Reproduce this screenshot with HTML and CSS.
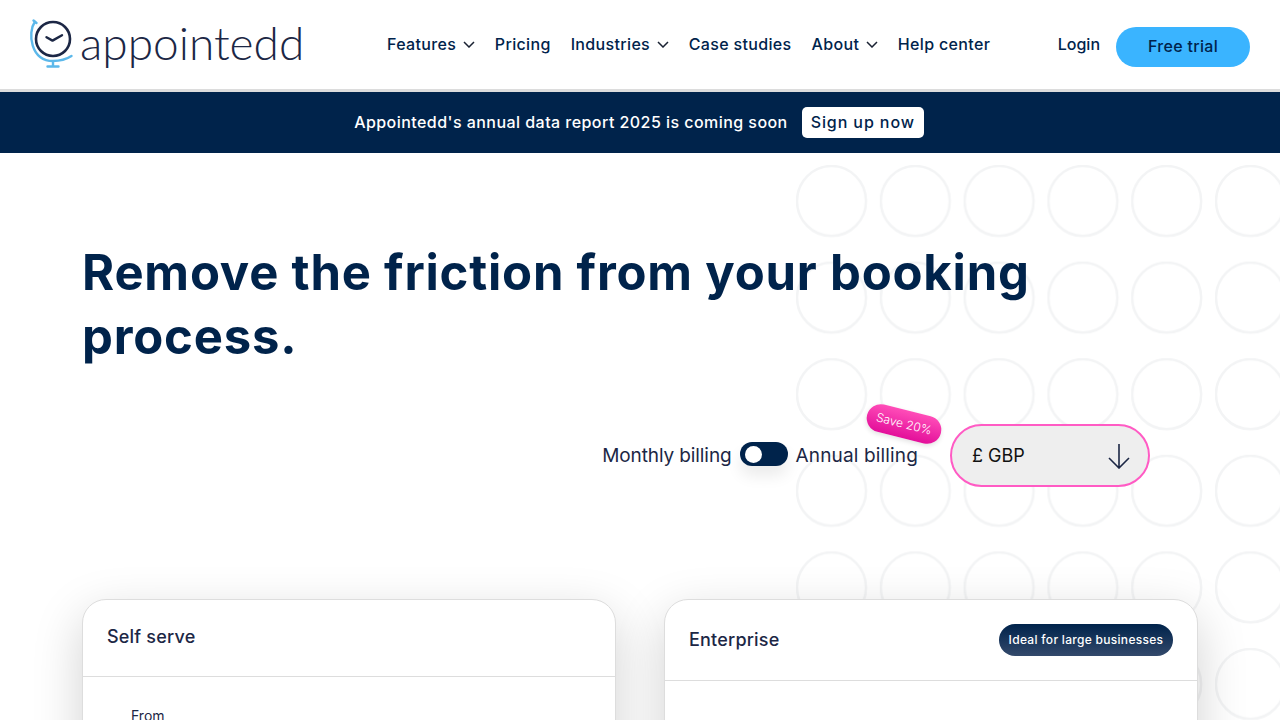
FILE: index.html
```html
<!DOCTYPE html>
<html lang="en">
<head>
    <meta charset="UTF-8">
    <title>Appointedd - Pricing</title>
    <link rel="stylesheet" href="styles.css">
</head>
<body>
<header class="site-header">
    <a class="logo" href="#">
        <svg class="logo-mark" width="46" height="50" viewBox="28 18 46 50" fill="none">
            <circle cx="53" cy="39" r="17" stroke="#1c2745" stroke-width="2.6"/>
            <path d="M46.5 37.2l6 3.4 9.5-5.4" stroke="#1c2745" stroke-width="2.4" stroke-linecap="round" stroke-linejoin="round"/>
            <path d="M33.500 20.500l3 2.500M35 21.500C27 33 31 61 53 61c7 0 13-1.500 18.500-5M53 61v5.500M47.500 66.500h11" stroke="#5cb8ea" stroke-width="2.4" stroke-linecap="round"/>
        </svg>
        <span class="logo-text">appointedd</span>
    </a>
    <nav class="main-nav">
        <a href="#" class="nav-link">Features <svg class="chevron" width="12" height="7" viewBox="0 0 12 7" fill="none"><path d="M1 1l5 5 5-5" stroke="#1a2233" stroke-width="1.500"/></svg></a>
        <a href="#" class="nav-link">Pricing</a>
        <a href="#" class="nav-link">Industries <svg class="chevron" width="12" height="7" viewBox="0 0 12 7" fill="none"><path d="M1 1l5 5 5-5" stroke="#1a2233" stroke-width="1.500"/></svg></a>
        <a href="#" class="nav-link">Case studies</a>
        <a href="#" class="nav-link">About <svg class="chevron" width="12" height="7" viewBox="0 0 12 7" fill="none"><path d="M1 1l5 5 5-5" stroke="#1a2233" stroke-width="1.500"/></svg></a>
        <a href="#" class="nav-link">Help center</a>
    </nav>
    <div class="header-actions">
        <a href="#" class="nav-link login">Login</a>
        <a href="#" class="btn-trial">Free trial</a>
    </div>
</header>

<div class="banner">
    <span>Appointedd's annual data report 2025 is coming soon</span>
    <a href="#" class="banner-btn">Sign up now</a>
</div>

<main class="pricing">
    <svg class="circles" width="490" height="570" aria-hidden="true">
        <defs>
            <pattern id="ring" width="83.800" height="96.600" patternUnits="userSpaceOnUse">
                <ellipse cx="35.500" cy="36" rx="34.500" ry="35" fill="none" stroke="#f3f4f5" stroke-width="2.500"/>
            </pattern>
        </defs>
        <rect width="490" height="570" fill="url(#ring)"/>
    </svg>

    <h1>Remove the friction from your booking process.</h1>

    <div class="billing">
        <span class="billing-label monthly">Monthly billing</span>
        <span class="toggle"><span class="toggle-knob"></span></span>
        <span class="billing-label annual">Annual billing<span class="save-badge">Save 20%</span></span>
        <div class="currency">
            <span>£ GBP</span>
            <svg width="24" height="26" viewBox="0 0 24 26" fill="none"><path d="M12 1v24M2 15l10 10 10-10" stroke="#1c2745" stroke-width="1.600"/></svg>
        </div>
    </div>

    <div class="plans">
        <section class="plan">
            <div class="plan-head self"><h2>Self serve</h2></div>
            <div class="plan-body"><p class="from">From</p></div>
        </section>
        <section class="plan">
            <div class="plan-head"><h2>Enterprise</h2><span class="tag">Ideal for large businesses</span></div>
        </section>
    </div>
</main>
</body>
</html>
```

FILE: styles.css
```css
* {
    box-sizing: border-box;
}
html, body {
    margin: 0;
    height: 720px;
    overflow: hidden;
}
body {
    font-family: Inter, "Noto Sans", sans-serif;
    background-color: #fff;
    color: #1c2745;
}
a {
    text-decoration: none;
    color: inherit;
}
.site-header {
    height: 92px;
    display: flex;
    align-items: center;
    padding: 0 30px 4px 28px;
    border-bottom: 3px solid #dcdcdc;
}
.logo {
    display: flex;
    align-items: center;
    gap: 6px;
    width: 359px;
}
.logo-text {
    font-family: Lato, sans-serif;
    font-weight: 300;
    font-size: 46px;
    line-height: 50px;
    color: #1c2745;
}
.main-nav {
    display: flex;
    gap: 20px;
    margin-top: 3px;
}
.nav-link {
    font-size: 16px;
    font-weight: 500;
    letter-spacing: .34px;
    color: #00234b;
    white-space: nowrap;
}
.chevron {
    margin-left: 2px;
    vertical-align: 2px;
}
.header-actions {
    margin-left: auto;
    display: flex;
    align-items: center;
    gap: 16px;
}
.btn-trial {
    width: 134px;
    height: 40px;
    margin-top: 8px;
    padding-bottom: 2px;
    border-radius: 20px;
    background-color: #3ab4ff;
    color: #00234b;
    font-size: 16px;
    font-weight: 500;
    letter-spacing: .3px;
    display: flex;
    align-items: center;
    justify-content: center;
}
.login {
    margin-top: 3px;
    letter-spacing: 0;
}
.banner {
    height: 61px;
    background-color: #00234b;
    color: #fff;
    display: flex;
    align-items: center;
    justify-content: center;
    gap: 14px;
    font-size: 16px;
    font-weight: 500;
    letter-spacing: .45px;
    padding: 0 2px 1px 0;
}
.banner-btn {
    background-color: #fff;
    color: #00234b;
    border-radius: 5px;
    padding: 0 9px;
    line-height: 31px;
    letter-spacing: .9px;
}
.pricing {
    position: relative;
    padding: 0 82px;
}
.circles {
    position: absolute;
    left: 796px;
    top: 12px;
}
h1 {
    position: relative;
    margin: 0;
    padding-top: 88px;
    font-size: 49px;
    line-height: 64px;
    font-weight: 700;
    letter-spacing: .8px;
    color: #00234b;
    max-width: 1000px;
}
.billing {
    position: relative;
    display: flex;
    align-items: center;
    justify-content: flex-end;
    margin: 55px 48px 0 0;
    height: 63px;
}
.billing-label {
    font-size: 19px;
    color: #1c2745;
}
.monthly {
    letter-spacing: -.1px;
}
.annual {
    position: relative;
    margin-right: 32px;
    letter-spacing: .15px;
}
.toggle {
    width: 48px;
    height: 24px;
    border-radius: 12px;
    background-color: #00234b;
    margin: 0 8px 3px;
    padding: 4px 5px;
    box-shadow: 0 10px 15px rgba(0, 0, 0, .08);
}
.toggle-knob {
    display: block;
    width: 17px;
    height: 17px;
    border-radius: 50%;
    background-color: #fff;
}
.save-badge {
    position: absolute;
    right: -24px;
    top: -34px;
    width: 76px;
    height: 28px;
    border-radius: 14px;
    background: linear-gradient(#ff4db8, #e30f9a);
    color: #fff;
    font-size: 12px;
    font-weight: 300;
    letter-spacing: 0;
    line-height: 28px;
    text-align: center;
    transform: rotate(14deg);
    box-shadow: 0 2px 5px rgba(0, 0, 0, .12);
}
.currency {
    width: 200px;
    height: 63px;
    border: 2px solid #ff5bc4;
    border-radius: 32px;
    background-color: #eee;
    display: flex;
    align-items: center;
    justify-content: space-between;
    padding: 0 17px 0 20px;
    font-size: 18px;
    color: #111;
}
.plans {
    position: relative;
    display: grid;
    grid-template-columns: 534px 534px;
    gap: 48px;
    margin-top: 112px;
}
.plan {
    height: 300px;
    background-color: #fff;
    border: 1px solid #ddd;
    border-radius: 24px;
    box-shadow: 0 16px 50px rgba(0, 0, 0, .18);
}
.plan-head {
    height: 81px;
    display: flex;
    align-items: center;
    justify-content: space-between;
    padding: 0 24px 0;
    border-bottom: 1px solid #ddd;
}
.plan-head h2 {
    margin: 0 0 2px;
    font-size: 18px;
    font-weight: 500;
    letter-spacing: .2px;
    color: #1c2745;
}
.plan-head.self {
    height: 77px;
    padding-bottom: 2px;
}
.tag {
    height: 32px;
    width: 174px;
    border-radius: 16px;
    background: linear-gradient(#00234b, #33496b);
    color: #fff;
    font-size: 12px;
    font-weight: 500;
    letter-spacing: .3px;
    line-height: 31px;
    text-align: center;
}
.from {
    margin: 30px 0 0 48px;
    font-size: 14px;
    color: #1c2745;
}
```
